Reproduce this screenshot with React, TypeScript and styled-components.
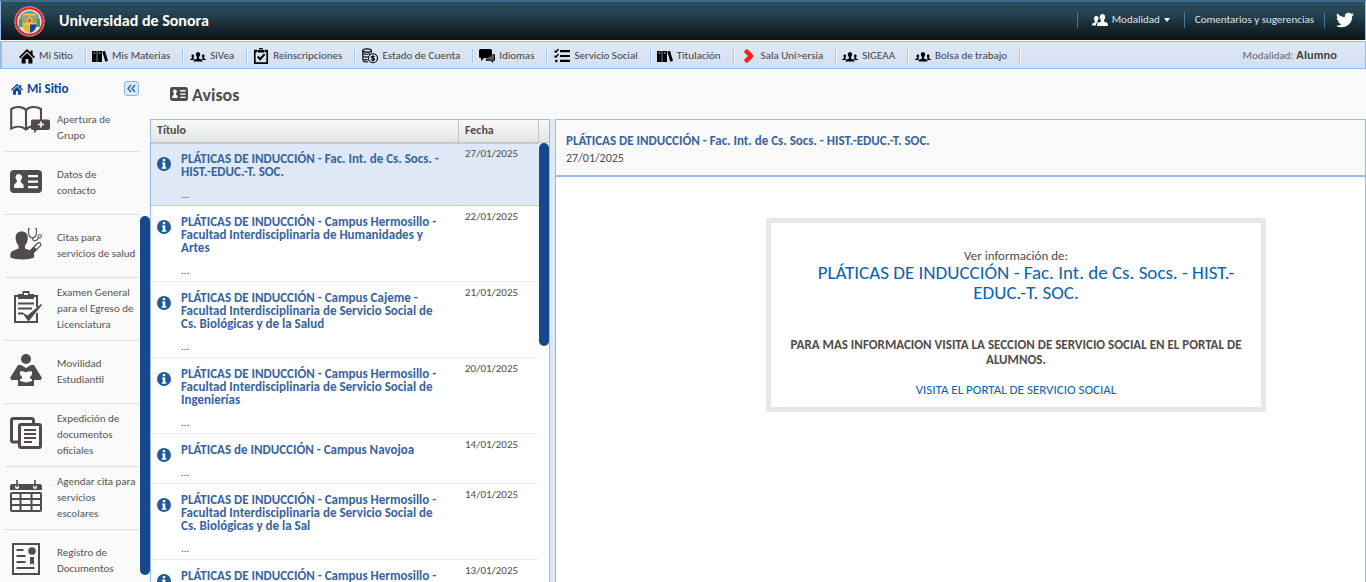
import React from "react";
import styled, { createGlobalStyle, css } from "styled-components";
import { FaTwitter } from "react-icons/fa";

const line = "#99bbe8";
const ink = "#504c4b";

const GlobalStyle = createGlobalStyle`
  *, *::before, *::after { box-sizing: border-box; }
  body {
    margin: 0;
    background: #fafafa;
    color: ${ink};
    font: 11px/16px Carlito, Calibri, Lato, sans-serif;
  }
  a { color: inherit; text-decoration: none; }
  svg { display: block; flex: none; }
`;

const Page = styled.div`
  height: 100vh;
  display: flex;
  flex-direction: column;
  overflow: hidden;
`;

const TopBar = styled.header`
  flex: none;
  height: 40px;
  display: flex;
  align-items: center;
  border-top: 2px solid #3d6b89;
  border-left: 1px solid ${line};
  border-right: 1px solid ${line};
  background: linear-gradient(#2c4f61, #24414f 35%, #192c35 60%, #0c1417);
  padding-left: 13px;
  color: #fff;
`;

const Brand = styled.h1`
  flex: 1;
  margin: 0 0 0 14px;
  font-size: 16px;
  line-height: 20px;
  font-weight: 700;
`;

const TopItem = styled.div<{ $pad: number }>`
  display: flex;
  align-items: center;
  height: 16px;
  margin-bottom: 2px;
  padding: 0 ${p => p.$pad}px;
  border-left: 1px solid #437aa0;
  color: #dfe4e8;
`;

const PlainButton = styled.button`
  display: flex;
  align-items: center;
  gap: 4px;
  padding: 0;
  border: 0;
  background: none;
  color: inherit;
  font: inherit;
  cursor: pointer;
`;

const NavBar = styled.nav`
  flex: none;
  height: 28px;
  margin-top: 1px;
  display: flex;
  align-items: center;
  border: 1px solid ${line};
  border-left-width: 2px;
  padding: 1px 0 0 9px;
  background: linear-gradient(#dfe8f4, #d3e0f1);
  color: #444;
`;

const NavLink = styled.a`
  display: flex;
  align-items: center;
  gap: 4px;
  height: 14px;
  padding: 0 12px 0 6px;
  border-right: 1px solid #98c8ff;
  box-shadow: 1px 0 #fff;
  white-space: nowrap;
  svg { color: #000; }
  &:first-child { padding-left: 8px; }
  &:nth-child(even) { margin-right: 1px; }
`;

const Mode = styled.span`
  margin-left: auto;
  padding-right: 28px;
  color: #666;
  b { font: 700 11px/16px "Liberation Sans", sans-serif; color: #444; }
`;

const Body = styled.div`
  flex: 1;
  min-height: 0;
  display: flex;
`;

const Sidebar = styled.aside`
  width: 150px;
  flex: none;
  display: flex;
  flex-direction: column;
`;

const SideHead = styled.div`
  flex: none;
  height: 36px;
  display: flex;
  align-items: center;
  justify-content: space-between;
  padding: 3px 11px 0;
`;

const SideTitle = styled.h2`
  display: flex;
  align-items: center;
  gap: 4px;
  margin: 0;
  font-size: 13px;
  line-height: 18px;
  color: #0c4596;
`;

const Collapse = styled.button`
  width: 15px;
  height: 15px;
  padding: 0;
  display: grid;
  place-items: center;
  border: 1px solid #8db4e4;
  border-radius: 3px;
  background: #dcebfa;
  color: #2c68ae;
`;

const SideBody = styled.div`
  flex: 1;
  min-height: 0;
  display: flex;
`;

const SideScroll = styled.div`
  flex: 1;
  overflow: hidden;
`;

const SideList = styled.ul`
  margin: -16px 1px 0 5px;
  padding: 0;
  list-style: none;
`;

const SideItem = styled.li`
  height: 63px;
  border-bottom: 1px solid #ddd;
`;

const SideLink = styled.a`
  height: 100%;
  display: grid;
  grid-template-columns: 47px 1fr;
  align-items: center;
  padding-left: 5px;
  color: #555;
  white-space: nowrap;
  svg { margin-bottom: 4px; }
`;

const Track = styled.div<{ $top?: number }>`
  width: 10px;
  flex: none;
  padding-top: ${p => p.$top ?? 0}px;
`;

const Thumb = styled.div<{ $h: number }>`
  height: ${p => p.$h}px;
  border-radius: 5px;
  background: #15498b;
`;

const Main = styled.main`
  flex: 1;
  min-width: 0;
  display: flex;
  flex-direction: column;
`;

const PageTitle = styled.h2`
  flex: none;
  height: 50px;
  margin: 0;
  padding: 2px 0 0 20px;
  display: flex;
  align-items: center;
  gap: 4px;
  font-size: 18px;
  line-height: 22px;
  svg { margin-bottom: 2px; }
`;

const Split = styled.div`
  flex: 1;
  min-height: 0;
  display: flex;
  gap: 5px;
  background: #dfe8f6;
`;

const ListPane = styled.section`
  width: 400px;
  flex: none;
  display: flex;
  border: 1px solid ${line};
  border-bottom: 0;
  background: #fff;
  overflow: hidden;
`;

const Notices = styled.table`
  width: 388px;
  flex: none;
  align-self: flex-start;
  table-layout: fixed;
  border-collapse: separate;
  border-spacing: 0;
`;

const Th = styled.th<{ $w?: number }>`
  height: 23px;
  width: ${p => (p.$w ? p.$w + "px" : "auto")};
  padding: 0 6px 2px;
  border-right: 1px solid #c5c5c5;
  border-bottom: 1px solid #c5c5c5;
  background: linear-gradient(#f9f9f9, #e3e4e6);
  text-align: left;
  font-size: 12px;
  line-height: 14px;
`;

const Td = styled.td<{ $on: boolean }>`
  vertical-align: top;
  padding: 1px 6px 0;
  border-bottom: 1px solid #ededed;
  ${p => p.$on && css`
    padding-top: 0;
    background: #dfe8f6;
    border-top: 1px dotted #a3bae9;
    border-bottom: 1px dotted #a3bae9;
  `}
`;

const Notice = styled.div`
  display: grid;
  grid-template-columns: 24px 1fr;
  padding: 8px 0 4px;
  line-height: 13px;
  svg { margin-top: 5px; }
`;

const NoticeTitle = styled.a`
  display: block;
  margin-bottom: 10px;
  font-size: 13px;
  font-weight: 700;
  color: #3764a0;
  white-space: pre-line;
`;

const DateText = styled.time`
  display: block;
  padding-top: 2px;
`;

const ScrollCol = styled.div`
  flex: 1;
  &::before {
    content: "";
    display: block;
    height: 23px;
    border-bottom: 1px solid #c5c5c5;
    background: linear-gradient(#f9f9f9, #e3e4e6);
  }
`;

const Detail = styled.section`
  flex: 1;
  min-width: 0;
  border: 1px solid ${line};
  border-bottom: 0;
  background: #fff;
`;

const DetailHead = styled.header`
  height: 57px;
  padding: 12px 10px 0;
  border-bottom: 2px solid ${line};
  background: #fafafa;
  font-size: 12px;
  line-height: 16px;
  h3 { margin: 0; font-size: 13px; line-height: 18px; color: #3764a0; }
`;

const Card = styled.article`
  width: 500px;
  margin: 41px 0 0 210px;
  padding: 25px 18px 10px;
  border: 5px solid #e3e9ed;
  text-align: center;
  font-size: 13px;
  line-height: 15px;
  h4 {
    margin: 0 0 34px;
    padding: 0 0 0 20px;
    font-size: 19px;
    line-height: 20px;
    font-weight: 400;
    color: #0a62b0;
  }
  p { margin: 0; }
  p + a { display: block; margin-top: 15px; color: #0a62b0; }
`;

type IconProps = { size?: number };

const Home = ({ size = 16 }: IconProps) => (
  <svg width={size} height={size} viewBox="0 0 16 16" fill="currentColor">
    <path d="M8 1 0 9l1.2 1.2L8 3.6l6.8 6.6L16 9l-2.400-2.400V2.500h-2v2.100z" />
    <path d="M8 5 2.600 10.300V15.500h4V11h2.800v4.500h4v-5.200z" />
  </svg>
);
const Books = () => (
  <svg width="16" height="16" viewBox="0 0 16 16">
    <path d="M0 3h4.700v11H0zM5.300 3H10v11H5.300z" />
    <path d="m10.300 3.700 2.700-.9L16 12.800l-2.700 1z" />
    <path d="M1.500 5h1.700M6.800 5h1.700" stroke="#d8e4f3" strokeWidth="1" />
  </svg>
);
const People = () => (
  <svg width="16" height="16" viewBox="0 0 16 16">
    <ellipse cx="8" cy="6.500" rx="2.200" ry="2.600" /><circle cx="2.800" cy="8" r="1.400" /><circle cx="13.200" cy="8" r="1.400" />
    <path d="M7 8h2v2.500l3 1.200.7 1.800H3.300l.7-1.800 3-1.200zM2.200 9h1.300v1.200l.7.600-1 1.200H0l.3-1 1.900-.8zM13.800 9h-1.300v1.200l-.7.600 1 1.200H16l-.3-1-1.900-.8z" />
  </svg>
);
const ClipCheck = () => (
  <svg width="16" height="16" viewBox="0 0 16 16" fill="none" stroke="#000" strokeWidth="1.700">
    <path d="M1.800 3v12.200h12.400V3" /><path d="M1 3h3.500M11.500 3H15M5 3.200h6" strokeWidth="2.400" />
    <path d="M6.500 1.500C6.500 0 9.500 0 9.500 1.500" strokeWidth="1.300" /><path d="m4.700 8.500 2.500 2.700 4.400-5" strokeWidth="2" />
  </svg>
);
const Coins = () => (
  <svg width="16" height="16" viewBox="0 0 16 16" fill="none" stroke="#000" strokeWidth="1.100">
    <ellipse cx="5" cy="2.500" rx="4.300" ry="1.600" />
    <path d="M.7 2.500v2c0 2 5 2.200 7.500 1M.7 5.500v2c0 1.700 4 2 6 1.200M.7 8.500v1.800c0 1.500 3 1.900 5 1.400M1 11.300v1.500c1 1 3 1.400 5 1M9.300 2.500V4.700" />
    <circle cx="11" cy="10.300" r="4.500" fill="#d8e4f3" />
    <path d="M12.700 8.600c-1-.7-3.400-.6-3.400.6 0 1.300 3.400.8 3.400 2.100 0 1.200-2.400 1.300-3.500.5M11 7.200v6.300" />
  </svg>
);
const Chats = () => (
  <svg width="16" height="16" viewBox="0 0 16 16">
    <path d="M1.500 1h10Q13 1 13 2.500v6Q13 10 11.500 10H5l-3 3v-3Q0 10 0 8.500v-6Q0 1 1.500 1" />
    <path d="M13.700 6.700h1.800v5.600h-1.800v2l-2-2H7.300v-1.600" fill="#555" stroke="#000" />
  </svg>
);
const Checks = () => (
  <svg width="16" height="16" viewBox="0 0 16 16" fill="none" stroke="#000">
    <path d="M6 3.200h10M6 8h10M6 12.800h10" strokeWidth="2.200" />
    <path d="m.5 2.800 1.300 1.300L4.500 1.200M.5 7.800l1.300 1.300 2.700-2.900" strokeWidth="1.500" /><circle cx="2.300" cy="13" r="1.300" fill="#000" stroke="none" />
  </svg>
);
const RedArrow = () => (
  <svg width="16" height="16" viewBox="0 0 16 16" fill="none"><path d="M4.300 2.200 10 8l-5.700 5.800" stroke="#ff1d15" strokeWidth="4.400" strokeLinejoin="round" /></svg>
);
const Users = () => (
  <svg width="16" height="12" viewBox="0 0 16 12" fill="#fff">
    <path d="M10.500 0c3.200 0 3.400 4.500 1.500 6.300v1.200l3.500 1.600.5 2.900H5l.5-2.900L9 7.500V6.300C7 4.500 7.300 0 10.500 0" />
    <path d="M4 2c1.500-.3 2.500.8 2.500 2 0 1.500-.8 2.500-1.300 3v.7l1 .3L4.500 9l-.7 2.500H0l.4-2 2.500-1.200v-1C1.300 5.500 1.600 2.500 4 2" />
  </svg>
);
const IdCard = ({ size = 32 }: IconProps) => (
  <svg width={size} height={size < 32 ? 14 : 23} viewBox="0 0 32 23" fill={ink} preserveAspectRatio="none">
    <rect width="32" height="23" rx="4" />
    <path d="M9 4a3.400 3.400 0 0 1 2 6l-.4 1.800 3 3.200v3H4v-3l3-3.200L6.600 10A3.400 3.400 0 0 1 9 4M18 5h10v2.200H18zM18 10.500h10v2.200H18zM18 16h10v2.200H18z" fill="#fff" />
  </svg>
);
const Info = () => (
  <svg width="14" height="14" viewBox="0 0 14 14">
    <circle cx="7" cy="7" r="7" fill="#205c98" />
    <path d="M5.800 2h2.400v2.200H5.800zM5 5.500h3.300v4.700h1V11.700H4.800v-1.500h1V7H5z" fill="#fff" />
  </svg>
);
const Crest = () => (
  <svg width="31" height="31" viewBox="0 0 31 31">
    <circle cx="15.500" cy="15.500" r="15.200" fill="#a9a3b8" />
    <circle cx="15.500" cy="15.500" r="13.500" fill="none" stroke="#e0202a" strokeWidth="2.600" />
    <circle cx="15.500" cy="15.500" r="14.300" fill="none" stroke="#eadbd8" strokeWidth=".7" strokeDasharray="1.500 1.500" />
    <circle cx="15.500" cy="15.500" r="12" fill="#dcdcd8" />
    <path d="M6 12q0-3 3-5 6.500-4 13 0 3 2 3 5v5H6z" fill="#5a9ab4" />
    <path d="M5 13h4v8H5zM22 13h4v8h-4z" fill="#4f9b62" />
    <path d="M8.500 10h14v8q0 7-7 9-7-2-7-9z" fill="#e8b62c" />
    <path d="M8.500 10h14v7h-14z" fill="#9aa07e" />
    <path d="M15.500 18h7q0 7-7 9z" fill="#17458f" />
    <path d="M9 7.500h13v2.200H9z" fill="#efc42f" />
    <path d="M15.500 10v17M8.500 18h14" stroke="#eee3b0" strokeWidth=".7" />
    <circle cx="15.500" cy="14.500" r="3.200" fill="#e8b62c" /><circle cx="15.500" cy="14.500" r="1.500" fill="#d9472b" />
  </svg>
);

const OpenBook = () => (
  <svg width="40" height="32" viewBox="0 -4 40 32">
    <path d="M16 4C12 0 5 .5 1.200 3v19.500C6 20 12 20 16 23.500 19 20.500 22 20 25 20.200M16 4v19.500M16 4c4-4 11-3.500 15-1v11" fill="none" stroke={ink} strokeWidth="2.100" />
    <path d="M22 13.500h16q2 0 2 2V22q0 2-2 2H27l-3 3.500V24h-2q-1 0-1-2v-7q0-1.500 1-1.500" fill={ink} />
    <path d="M31 15.500v6M28 18.500h6" stroke="#fff" strokeWidth="1.600" />
  </svg>
);
const Doctor = () => (
  <svg width="32" height="32" viewBox="0 0 32 32" fill="none" stroke={ink}>
    <path d="M11.500 3.500c5.500 0 7 4 6 9-.4 2-1.300 4-2.500 5v3l7 2.500c2 1 2.500 5 2 6.500-4 2.500-19 2.500-23.500 0-.5-3 0-5.500 2-6.500l6-2.500v-3C7 16 6 13.500 5.700 11c-.5-4.500 1.500-7.500 5.800-7.500" fill={ink} stroke="none" />
    <path d="M20 .7h-1.500v3c0 4 2 6 4 6s4-2 4-6v-3H25M22.500 9.700c0 5 5.500 3.500 6-1" strokeWidth="1.100" />
    <circle cx="29.800" cy="8.300" r="1.700" strokeWidth="1" />
    <path d="m23.500 24.500 6.500-6.300q1.500-1.800.3-3t-3 .3L21 22q-1.300 1.500 0 2.700t2.500-.2" strokeWidth="1.200" fill="#fff" />
    <path d="M24 19.200 21 22q-1.300 1.500 0 2.700t2.700-.2l2.800-2.800z" fill={ink} />
  </svg>
);
const Exam = () => (
  <svg width="32" height="32" viewBox="0 0 32 32" fill="none" stroke={ink} strokeWidth="2">
    <path d="M8 5H5v26h22v-9M24 5h3v11" /><path d="M8 3h4.500V0h7v3H24v5H8z" fill={ink} stroke="none" />
    <path d="M14 2h4v2h-4z" fill="#fff" stroke="none" /><path d="M8 12.500h16M8 17.500h14M8 22.500h5" />
    <path d="m11.500 21 6 3.500L31 13l1 1-13.500 16.500z" fill={ink} stroke="none" />
  </svg>
);
const Reader = () => (
  <svg width="32" height="32" viewBox="0 0 32 32" fill={ink}>
    <circle cx="16" cy="5" r="5" />
    <path d="M8 11h3l5 3 5-3h3l8 13-1.500 2H24v6H8v-6H1.500L0 24z" />
    <path d="M10 17.500q3-1 6 1 3-2 6-1V21q-2 .5-2 2.500t2 1.500v2q-3 .5-6 1.500-3-1-6-1.500v-2q2 .5 2-1.500T10 21z" fill="#fff" />
  </svg>
);
const Docs = () => (
  <svg width="32" height="32" viewBox="0 0 32 32" fill="none" stroke={ink} strokeWidth="2.400">
    <path d="M8 25H3.500q-2 0-2-2V3.500q0-2 2-2h18q2 0 2 2V7" strokeWidth="3" />
    <rect x="9.500" y="7.500" width="21" height="23" rx="1.500" strokeWidth="3" />
    <path d="M14 13h12M14 17h12M14 21h12M14 25h8" strokeWidth="1.800" />
  </svg>
);
const Calendar = () => (
  <svg width="32" height="32" viewBox="0 0 32 32" fill="none" stroke={ink} strokeWidth="2">
    <path d="M0 10V6q0-2 2-2h28q2 0 2 2v4z" fill={ink} stroke="none" />
    <circle cx="7" cy="7" r="2" fill="#fff" stroke="none" /><circle cx="25" cy="7" r="2" fill="#fff" stroke="none" />
    <path d="M7 0v7M25 0v7" strokeWidth="1.600" />
    <rect x="1" y="13" width="30" height="18" rx="1" /><path d="M1 19h30M1 25h30M10.500 13v18M21.500 13v18" />
  </svg>
);
const Certificate = () => (
  <svg width="32" height="32" viewBox="0 0 32 32" fill="none" stroke={ink} strokeWidth="2">
    <path d="M3 1h26v30H3z" /><path d="M6.500 7h7M6.500 13h9M6.500 19h9M6.500 25h18" />
    <circle cx="22" cy="8" r="3.800" fill={ink} stroke="none" /><path d="M20 14h4v8l-2-1.700-2 1.700z" fill={ink} stroke="none" />
  </svg>
);

const nav = [
  ["Mi Sitio", Home], ["Mis Materias", Books], ["SiVea", People], ["Reinscripciones", ClipCheck],
  ["Estado de Cuenta", Coins], ["Idiomas", Chats], ["Servicio Social", Checks], ["Titulación", Books],
  ["Sala Uni>ersia", RedArrow], ["SIGEAA", People], ["Bolsa de trabajo", People],
] as [string, React.FC][];

const side = [
  [OpenBook, "", "Apertura de", "Grupo"],
  [IdCard, "Datos de", "contacto"],
  [Doctor, "Citas para", "servicios de salud"],
  [Exam, "Examen General", "para el Egreso de", "Licenciatura"],
  [Reader, "Movilidad", "Estudiantil"],
  [Docs, "Expedición de", "documentos", "oficiales"],
  [Calendar, "Agendar cita para", "servicios", "escolares"],
  [Certificate, "Registro de", "Documentos"],
] as [React.FC, ...string[]][];

const notices = [
  ["PLÁTICAS DE INDUCCIÓN - Fac. Int. de Cs. Socs. -\nHIST.-EDUC.-T. SOC.", "27/01/2025"],
  ["PLÁTICAS DE INDUCCIÓN - Campus Hermosillo -\nFacultad Interdisciplinaria de Humanidades y\nArtes", "22/01/2025"],
  ["PLÁTICAS DE INDUCCIÓN - Campus Cajeme -\nFacultad Interdisciplinaria de Servicio Social de\nCs. Biológicas y de la Salud", "21/01/2025"],
  ["PLÁTICAS DE INDUCCIÓN - Campus Hermosillo -\nFacultad Interdisciplinaria de Servicio Social de\nIngenierías", "20/01/2025"],
  ["PLÁTICAS de INDUCCIÓN - Campus Navojoa", "14/01/2025"],
  ["PLÁTICAS DE INDUCCIÓN - Campus Hermosillo -\nFacultad Interdisciplinaria de Servicio Social de\nCs. Biológicas y de la Sal", "14/01/2025"],
  ["PLÁTICAS DE INDUCCIÓN - Campus Hermosillo -", "13/01/2025"],
];

export default function App() {
  return (
    <Page>
      <GlobalStyle />
      <TopBar>
        <Crest />
        <Brand>Universidad de Sonora</Brand>
        <TopItem $pad={14}>
          <PlainButton type="button">
            <Users />
            Modalidad
            <svg width="6" height="4" viewBox="0 0 6 4" fill="#fff"><path d="M0 0h6L3 4z" /></svg>
          </PlainButton>
        </TopItem>
        <TopItem $pad={10}><a href="#comentarios">Comentarios y sugerencias</a></TopItem>
        <TopItem $pad={11}><a href="#twitter" aria-label="Twitter"><FaTwitter size={18} color="#fff" /></a></TopItem>
      </TopBar>
      <NavBar>
        {nav.map(([label, Icon]) => (
          <NavLink href="#" key={label}><Icon />{label}</NavLink>
        ))}
        <Mode>Modalidad: <b>Alumno</b></Mode>
      </NavBar>
      <Body>
        <Sidebar>
          <SideHead>
            <SideTitle><Home size={12} />Mi Sitio</SideTitle>
            <Collapse type="button" aria-label="Contraer">
              <svg width="9" height="9" viewBox="0 0 9 9" fill="none" stroke="currentColor" strokeWidth="1.400"><path d="M4 1 1 4.500 4 8M8 1 5 4.500 8 8" /></svg>
            </Collapse>
          </SideHead>
          <SideBody>
            <SideScroll>
              <SideList>
                {side.map(([Icon, ...lines]) => (
                  <SideItem key={lines.join(" ")}>
                    <SideLink href="#">
                      <Icon />
                      <span>{lines.map((t, i) => <React.Fragment key={t}>{i > 0 && <br />}{t}</React.Fragment>)}</span>
                    </SideLink>
                  </SideItem>
                ))}
              </SideList>
            </SideScroll>
            <Track $top={111}><Thumb $h={359} /></Track>
          </SideBody>
        </Sidebar>
        <Main>
          <PageTitle><IdCard size={18} />Avisos</PageTitle>
          <Split>
            <ListPane>
              <Notices>
                <thead><tr><Th>Título</Th><Th $w={80}>Fecha</Th></tr></thead>
                <tbody>
                  {notices.map(([title, date], i) => (
                    <tr key={i}>
                      <Td $on={i === 0}>
                        <Notice>
                          <Info />
                          <div><NoticeTitle href="#">{title}</NoticeTitle>...</div>
                        </Notice>
                      </Td>
                      <Td $on={i === 0}><DateText>{date}</DateText></Td>
                    </tr>
                  ))}
                </tbody>
              </Notices>
              <ScrollCol><Thumb $h={203} /></ScrollCol>
            </ListPane>
            <Detail>
              <DetailHead>
                <h3>PLÁTICAS DE INDUCCIÓN - Fac. Int. de Cs. Socs. - HIST.-EDUC.-T. SOC.</h3>
                <time>27/01/2025</time>
              </DetailHead>
              <Card>
                <p>Ver información de:</p>
                <h4>PLÁTICAS DE INDUCCIÓN - Fac. Int. de Cs. Socs. - HIST.-EDUC.-T. SOC.</h4>
                <p><b>PARA MAS INFORMACION VISITA LA SECCION DE SERVICIO SOCIAL EN EL PORTAL DE ALUMNOS.</b></p>
                <a href="#portal">VISITA EL PORTAL DE SERVICIO SOCIAL</a>
              </Card>
            </Detail>
          </Split>
        </Main>
      </Body>
    </Page>
  );
}
